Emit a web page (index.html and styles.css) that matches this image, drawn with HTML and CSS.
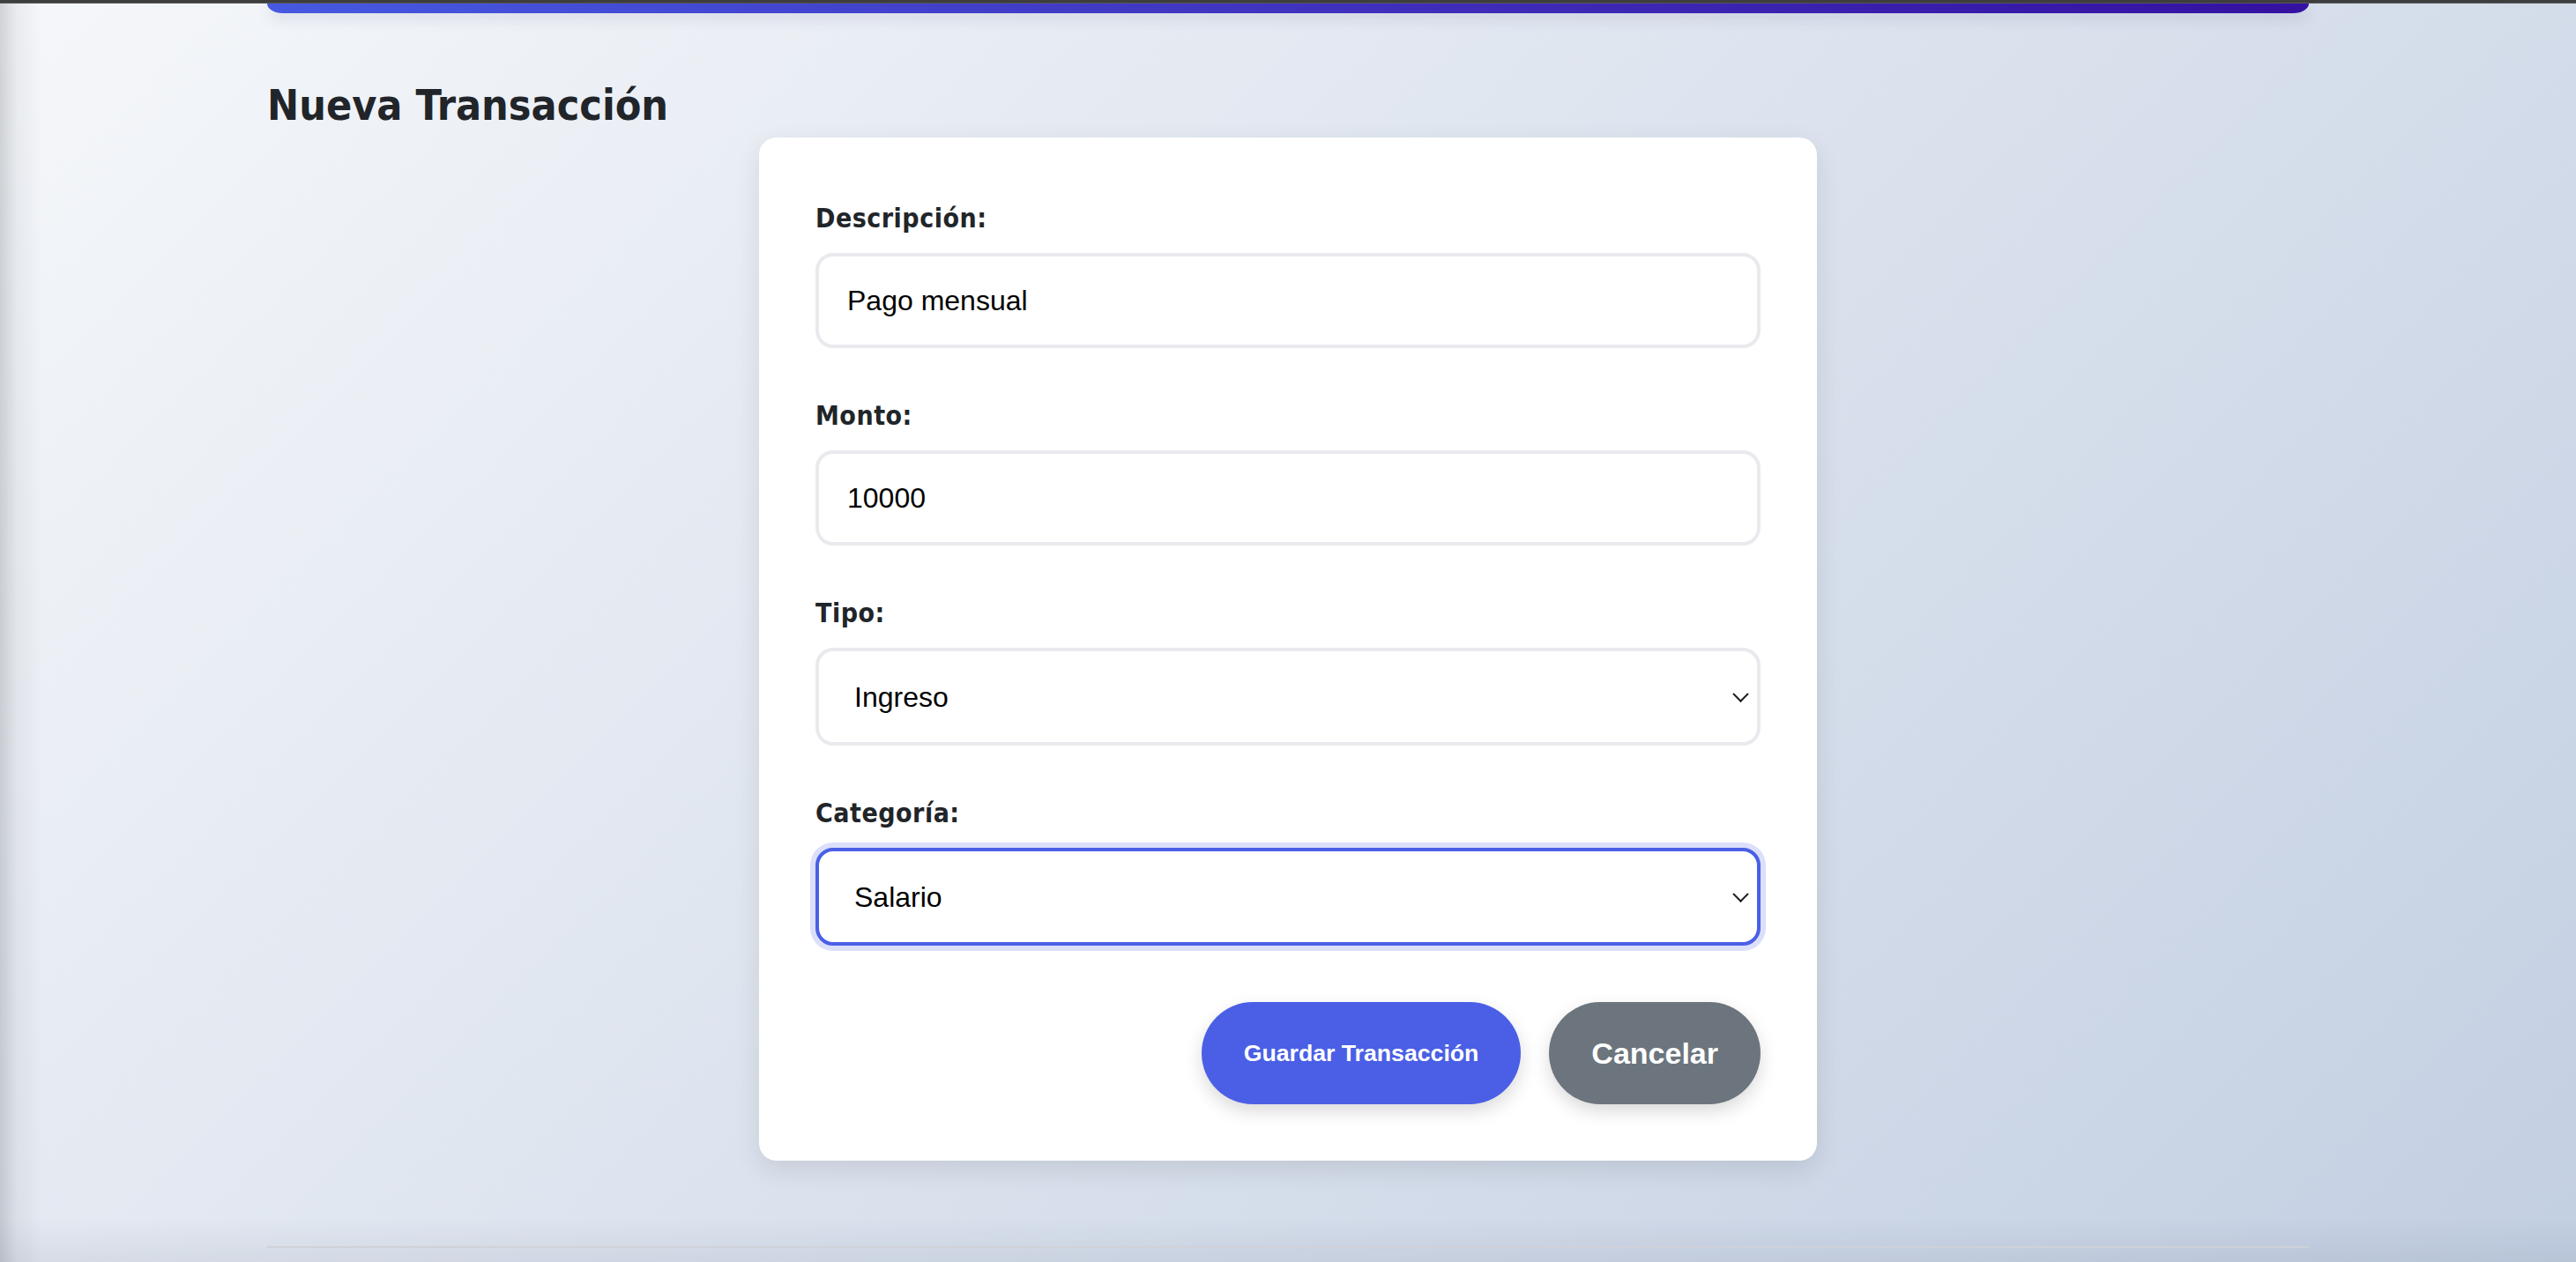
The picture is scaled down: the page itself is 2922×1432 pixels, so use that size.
FILE: index.html
```html
<!DOCTYPE html>
<html lang="es">
<head>
<meta charset="utf-8">
<title>Nueva Transacción</title>
<link rel="stylesheet" href="styles.css">
</head>
<body>
<div class="topstrip"></div>
<div class="container">
  <header class="app-header"></header>
  <h2 class="page-title">Nueva Transacción</h2>
  <form class="card">
    <div class="group">
      <label class="label" for="desc">Descripción:</label>
      <input class="field" id="desc" type="text" value="Pago mensual">
    </div>
    <div class="group">
      <label class="label" for="monto">Monto:</label>
      <input class="field" id="monto" type="text" value="10000">
    </div>
    <div class="group">
      <label class="label" for="tipo">Tipo:</label>
      <div class="select-wrap">
        <select class="field select" id="tipo">
          <option selected>Ingreso</option>
          <option>Gasto</option>
        </select>
      </div>
    </div>
    <div class="group last">
      <label class="label" for="cat">Categoría:</label>
      <div class="select-wrap">
        <select class="field select focused" id="cat">
          <option selected>Salario</option>
          <option>Otros</option>
        </select>
      </div>
    </div>
    <div class="actions">
      <button type="button" class="btn btn-primary">Guardar Transacción</button>
      <button type="button" class="btn btn-secondary">Cancelar</button>
    </div>
  </form>
  <footer class="app-footer"></footer>
</div>
</body>
</html>
```

FILE: styles.css
```css
html, body {
  margin: 0;
  padding: 0;
}
body {
  min-height: 100vh;
  overflow: hidden;
  background: linear-gradient(135deg, #f5f7fa 0%, #c3cfe2 100%);
  background-attachment: fixed;
  color: #212529;
  font-family: "DejaVu Sans Condensed", "DejaVu Sans", sans-serif;
  position: relative;
}
body::before {
  content: "";
  position: fixed;
  left: 0;
  top: 0;
  bottom: 0;
  width: 48px;
  background: linear-gradient(to right, rgba(60, 66, 74, 0.2), rgba(60, 66, 74, 0.06) 40%, rgba(60, 66, 74, 0));
  pointer-events: none;
}
body::after {
  content: "";
  position: fixed;
  left: 0;
  right: 0;
  bottom: 0;
  height: 50px;
  background: linear-gradient(to top, rgba(40, 50, 80, 0.07), rgba(40, 50, 80, 0));
  pointer-events: none;
}
.topstrip {
  height: 4px;
  background: #3e3e3e;
  border-bottom: 1px solid #5a5a5a;
  box-sizing: border-box;
}
.container {
  width: 2316px;
  margin: 0 auto;
}
.app-header {
  height: 11px;
  background: linear-gradient(90deg, #4659e0 0%, #3e2bb8 60%, #3411a0 100%);
  border-radius: 0 0 18px 18px / 0 0 11px 11px;
  box-shadow: 0 6px 16px rgba(30, 30, 80, 0.12);
}
.page-title {
  margin: 76px 0 8px 0;
  font-family: "DejaVu Sans Condensed", "DejaVu Sans", sans-serif;
  font-weight: bold;
  font-size: 48px;
  line-height: 57px;
  color: #212529;
}
.card {
  width: 1200px;
  box-sizing: border-box;
  margin: 0 auto;
  padding: 74px 64px 64px 64px;
  background: #ffffff;
  border-radius: 20px;
  box-shadow: 0 10px 30px rgba(0, 0, 0, 0.1);
}
.group {
  margin-bottom: 59px;
}
.group.last {
  margin-bottom: 0;
}
.label {
  display: block;
  font-family: "DejaVu Sans Condensed", "DejaVu Sans", sans-serif;
  font-weight: bold;
  font-size: 30px;
  line-height: 36px;
  letter-spacing: 0.5px;
  color: #212529;
  margin-bottom: 21px;
}
.field {
  display: block;
  width: 100%;
  box-sizing: border-box;
  height: 108px;
  margin: 0;
  padding: 0 32px;
  border: 4px solid #e9eaee;
  border-radius: 20px;
  background: #ffffff;
  font-family: "Liberation Sans", Arial, sans-serif;
  font-size: 32px;
  color: #000000;
  outline: none;
}
.select-wrap {
  position: relative;
}
.select {
  height: 111px;
  padding: 0 40px;
  appearance: none;
  -webkit-appearance: none;
}
.select-wrap::after {
  content: "";
  position: absolute;
  right: 16px;
  top: 50%;
  width: 11px;
  height: 11px;
  border-right: 2.5px solid #1e1e1e;
  border-bottom: 2.5px solid #1e1e1e;
  transform: translateY(-75%) rotate(45deg);
  pointer-events: none;
}
.select.focused {
  border-color: #4a5fe5;
  box-shadow: 0 0 0 6px rgba(74, 95, 229, 0.2);
}
.actions {
  display: flex;
  justify-content: flex-end;
  gap: 32px;
  margin-top: 64px;
}
.btn {
  height: 116px;
  padding: 0 48px;
  border: none;
  border-radius: 58px;
  color: #ffffff;
  font-family: "Liberation Sans", Arial, sans-serif;
  font-weight: bold;
  cursor: pointer;
  box-shadow: 0 8px 20px rgba(0, 0, 0, 0.15);
}
.btn-primary {
  background: #4a5fe5;
  font-size: 26.67px;
}
.btn-secondary {
  background: #6c757d;
  font-size: 34px;
}
.app-footer {
  margin-top: 97px;
  border-top: 2px solid #d9dae0;
  height: 40px;
}
```
